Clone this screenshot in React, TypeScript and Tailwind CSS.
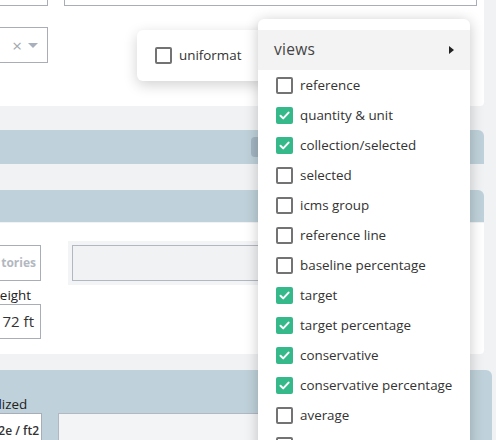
import { ReactNode } from 'react';

const views: { label: string; checked: boolean }[] = [
  { label: 'reference', checked: false },
  { label: 'quantity & unit', checked: true },
  { label: 'collection/selected', checked: true },
  { label: 'selected', checked: false },
  { label: 'icms group', checked: false },
  { label: 'reference line', checked: false },
  { label: 'baseline percentage', checked: false },
  { label: 'target', checked: true },
  { label: 'target percentage', checked: true },
  { label: 'conservative', checked: true },
  { label: 'conservative percentage', checked: true },
  { label: 'average', checked: false },
  { label: 'average percentage', checked: false },
];

function Checkbox({ checked }: { checked: boolean }) {
  if (checked) {
    return (
      <span className="w-[17px] h-[17px] shrink-0 rounded-[2px] bg-[#35b98a] flex items-center justify-center">
        <svg width="13" height="13" viewBox="0 0 13 13" fill="none">
          <path d="M2.5 6.8 L5.2 9.4 L10.6 3.6" stroke="white" strokeWidth="2" strokeLinecap="round" strokeLinejoin="round" />
        </svg>
      </span>
    );
  }
  return <span className="w-[17px] h-[17px] shrink-0 rounded-[2px] border-2 border-[#737373] bg-white" />;
}

function Field({ className, children }: { className?: string; children?: ReactNode }) {
  return <div className={`border border-[#a8adb7] ${className ?? ''}`}>{children}</div>;
}

export default function App() {
  return (
    <div className="relative w-[496px] h-[440px] overflow-hidden bg-[#f0f2f4] font-['Open_Sans',sans-serif] text-[#333]">
      {/* top card */}
      <div className="w-[484px] h-[106px] bg-white rounded-br">
        <div className="flex h-[6px]">
          <div className="w-[48px] border-r border-b border-[#a8adb7]" />
          <div className="ml-[16px] w-[413px] border-l border-r border-b border-[#a8adb7]" />
        </div>
        <Field className="mt-[21px] w-[48px] h-[36px] border-l-0 flex items-center justify-end pr-[9px] gap-[6px]">
          <span className="text-[#a3a7ad] text-[17px] leading-none">×</span>
          <span className="w-0 h-0 border-l-[5px] border-r-[5px] border-t-[5px] border-l-transparent border-r-transparent border-t-[#a9b0bd]" />
        </Field>
      </div>

      {/* collapsed section bars */}
      <div className="mt-[24px] w-[484px] h-[34px] bg-[#bfd1da] rounded-tr-md flex items-center">
        <div className="ml-[251px] w-[12px] h-[20px] rounded bg-[#a3b6c2]" />
      </div>
      <div className="mt-[26px] w-[484px] h-[32px] bg-[#bfd1da] rounded-tr-md" />

      {/* building card */}
      <div className="mt-[1px] w-[484px] h-[131px] bg-white rounded-br">
        <div className="pt-[18px] flex items-start">
          <div className="mt-[4px] w-[41px] h-[36px] border border-l-0 border-[#a8adb7] flex items-center justify-end pr-[4px] text-[12px] font-bold text-[#b3b7bf]">
            tories
          </div>
          <div className="ml-[27px] p-[4px] bg-[#f3f4f6] w-[260px]">
            <div className="h-[36px] border border-[#b3b7c2] bg-[#f0f2f4]" />
          </div>
        </div>
        <div className="mt-[2px] text-[13.4px] leading-[17px] -ml-[10px] text-[#222]">Height</div>
        <div className="w-[41px] h-[35px] border border-l-0 border-[#a8adb7] flex items-center justify-end pr-[6px] text-[15px] text-[#333]">
          72 ft
        </div>
      </div>

      {/* normalized section */}
      <div className="mt-[16px] w-[492px] h-[80px] bg-[#bfd1da] rounded-tr-md">
        <div className="pt-[26px] text-[13.4px] leading-[17px] -ml-[45px] text-[#222]">Normalized</div>
        <div className="flex items-start">
          <div className="w-[42px] h-[36px] border border-l-0 border-[#a8adb7] bg-white flex items-center justify-end pr-[2px] text-[12px] font-semibold text-[#333] overflow-hidden whitespace-nowrap">
            2e / ft2
          </div>
          <div className="ml-[16px] w-[300px] h-[36px] border border-[#b3b7c2] bg-[#f3f4f6]" />
        </div>
      </div>

      {/* uniformat popover */}
      <div className="absolute left-[137px] top-[30px] w-[130px] h-[51px] bg-white rounded-md shadow-[0_4px_14px_rgba(0,0,0,0.18)] flex items-center pl-[18px] gap-[7px] text-[13.4px]">
        <Checkbox checked={false} />
        <span>uniformat</span>
      </div>

      {/* views menu */}
      <div className="absolute left-[258px] top-[19px] w-[212px] h-[440px] bg-white rounded-t-md shadow-[0_2px_14px_rgba(0,0,0,0.22)] pt-[11px]">
        <div className="h-[40px] bg-[#f3f3f3] flex items-center justify-between pl-[16px] pr-[16px]">
          <span className="text-[15.5px] text-[#444] tracking-[0.3px]">views</span>
          <span className="w-0 h-0 border-t-[4px] border-b-[4px] border-l-[5px] border-t-transparent border-b-transparent border-l-[#222]" />
        </div>
        {views.map((v) => (
          <div key={v.label} className="h-[30px] flex items-center pl-[18px] gap-[7px] text-[13.4px] whitespace-nowrap">
            <Checkbox checked={v.checked} />
            <span>{v.label}</span>
          </div>
        ))}
      </div>
    </div>
  );
}
